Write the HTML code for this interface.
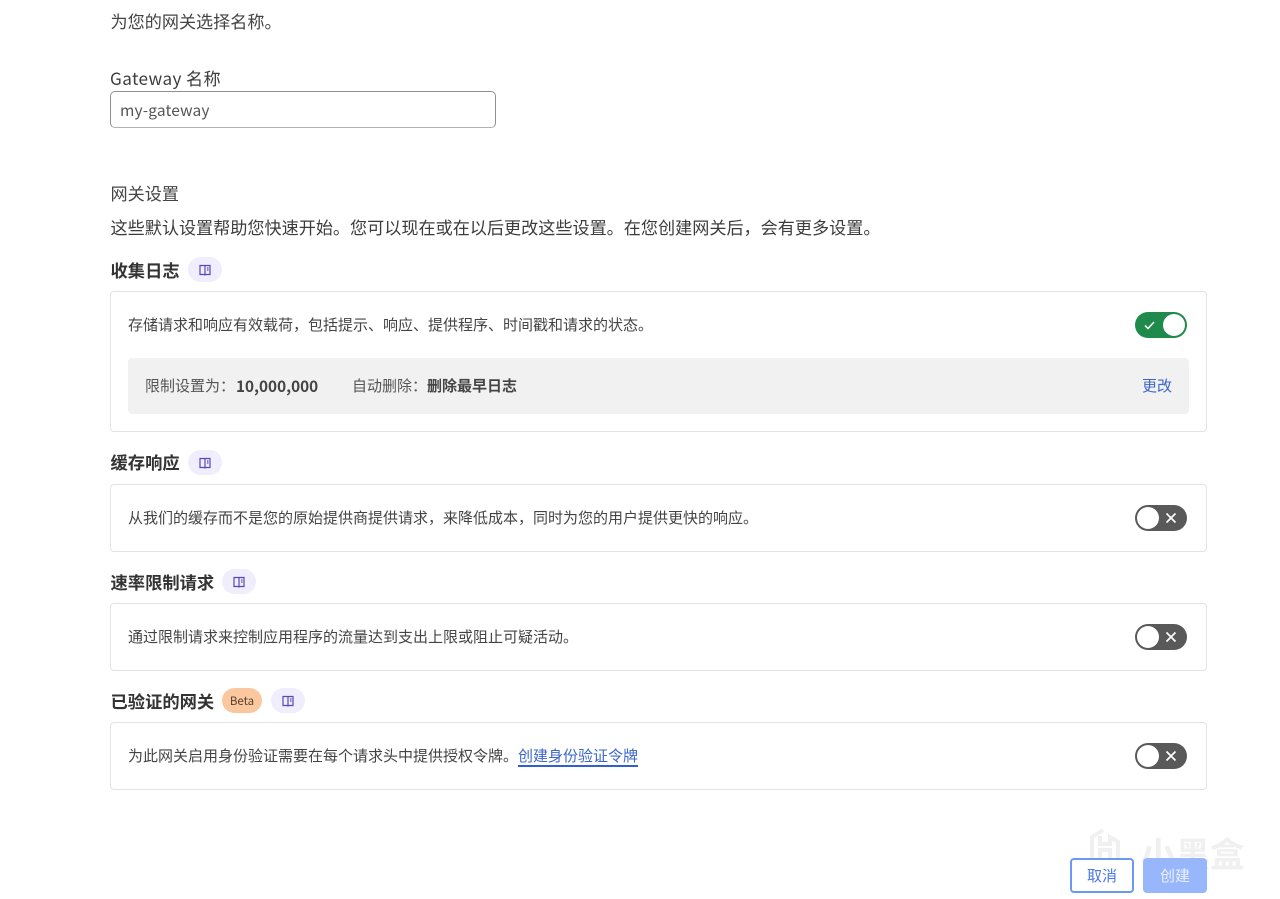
<!DOCTYPE html>
<html lang="zh"><head><meta charset="utf-8"><style>
html,body{margin:0;padding:0;background:#fff}
body{width:1280px;height:899px;position:relative;overflow:hidden;font-family:"Noto Sans CJK SC","Liberation Sans",sans-serif;color:#3c3c3c}
.t{position:absolute;white-space:nowrap;line-height:24px}
.h{font-size:17.3px;font-weight:700;color:#333}
.p{font-size:17.13px;color:#444}
.c{font-size:15px;color:#444}
.card{position:absolute;left:110px;width:1097px;background:#fff;border:1px solid #e3e3e3;border-radius:4px;box-sizing:border-box}
.pill{position:absolute;height:25px;border-radius:13px;background:#f0edfc;width:34px}
.pill svg{position:absolute;left:11px;top:7px}
.sw{position:absolute;left:1135px;width:52px;height:26px}
</style></head><body>
<div class="t p" style="left:110.500px;top:9px">为您的网关选择名称。</div>
<div class="t p" style="left:110px;top:66px;color:#3c3c3c;letter-spacing:.4px">Gateway 名称</div>
<div style="position:absolute;left:110px;top:91px;width:386px;height:37px;box-sizing:border-box;border:1px solid #8f8f8f;border-bottom-color:#b0b0b0;border-radius:5px"></div>
<div class="t" style="left:120px;top:98px;font-size:15.500px;color:#555;letter-spacing:.15px">my-gateway</div>

<div class="t p" style="left:110.500px;top:181px">网关设置</div>
<div class="t p" style="left:110.500px;top:215px;color:#3c3c3c">这些默认设置帮助您快速开始。您可以现在或在以后更改这些设置。在您创建网关后，会有更多设置。</div>

<div class="t h" style="left:110.500px;top:258px">收集日志</div>
<div class="pill" style="left:188px;top:257px"><svg width="12" height="12" viewBox="0 0 12 12" fill="none" stroke="#5b46b8" stroke-width="1.2"><path d="M1 1.500h4.500l.5.500.5-.500H11v9H6.500l-.5.500-.5-.500H1zM6 2v8.500M8 4h1.500M8 6h1.500"/></svg></div>
<div class="card" style="top:291px;height:141px"></div>
<div class="t c" style="left:128px;top:313px">存储请求和响应有效载荷，包括提示、响应、提供程序、时间戳和请求的状态。</div>
<svg class="sw" style="top:312px" viewBox="0 0 52 26"><rect width="52" height="26" rx="13" fill="#1f8a4c"/><circle cx="39" cy="13" r="11" fill="#fff"/><path d="M10 13.500l3 3 6-6.500" fill="none" stroke="#fff" stroke-width="1.500"/></svg>
<div style="position:absolute;left:128px;top:358px;width:1061px;height:56px;background:#f1f1f1;border-radius:4px"></div>
<div class="t c" style="left:145px;top:374px;color:#555">限制设置为：</div>
<div class="t" style="left:236px;top:374px;font-size:15.300px;font-weight:700;color:#444">10,000,000</div>
<div class="t c" style="left:352px;top:374px;color:#555">自动删除：</div>
<div class="t c" style="left:427px;top:374px;font-weight:700">删除最早日志</div>
<div class="t c" style="left:1142px;top:374px;color:#3b66c8">更改</div>

<div class="t h" style="left:110.500px;top:450px">缓存响应</div>
<div class="pill" style="left:188px;top:450px"><svg width="12" height="12" viewBox="0 0 12 12" fill="none" stroke="#5b46b8" stroke-width="1.2"><path d="M1 1.500h4.500l.5.500.5-.500H11v9H6.500l-.5.500-.5-.500H1zM6 2v8.500M8 4h1.500M8 6h1.500"/></svg></div>
<div class="card" style="top:484px;height:68px"></div>
<div class="t c" style="left:128px;top:506px">从我们的缓存而不是您的原始提供商提供请求，来降低成本，同时为您的用户提供更快的响应。</div>
<svg class="sw" style="top:505px" viewBox="0 0 52 26"><rect width="52" height="26" rx="13" fill="#595959"/><circle cx="13" cy="13" r="11" fill="#fff"/><path d="M31.500 8.500l9 9M40.500 8.500l-9 9" fill="none" stroke="#fff" stroke-width="1.700"/></svg>

<div class="t h" style="left:110.500px;top:570px">速率限制请求</div>
<div class="pill" style="left:222px;top:569px"><svg width="12" height="12" viewBox="0 0 12 12" fill="none" stroke="#5b46b8" stroke-width="1.2"><path d="M1 1.500h4.500l.5.500.5-.500H11v9H6.500l-.5.500-.5-.500H1zM6 2v8.500M8 4h1.500M8 6h1.500"/></svg></div>
<div class="card" style="top:603px;height:68px"></div>
<div class="t c" style="left:128px;top:625px">通过限制请求来控制应用程序的流量达到支出上限或阻止可疑活动。</div>
<svg class="sw" style="top:624px" viewBox="0 0 52 26"><rect width="52" height="26" rx="13" fill="#595959"/><circle cx="13" cy="13" r="11" fill="#fff"/><path d="M31.500 8.500l9 9M40.500 8.500l-9 9" fill="none" stroke="#fff" stroke-width="1.700"/></svg>

<div class="t h" style="left:110.500px;top:689px">已验证的网关</div>
<div style="position:absolute;left:222px;top:688px;width:40px;height:25px;border-radius:13px;background:#fbc79e;text-align:center;font-size:11.500px;line-height:26px;color:#5a4030">Beta</div>
<div class="pill" style="left:271px;top:688px"><svg width="12" height="12" viewBox="0 0 12 12" fill="none" stroke="#5b46b8" stroke-width="1.2"><path d="M1 1.500h4.500l.5.500.5-.500H11v9H6.500l-.5.500-.5-.500H1zM6 2v8.500M8 4h1.500M8 6h1.500"/></svg></div>
<div class="card" style="top:722px;height:68px"></div>
<div class="t c" style="left:128px;top:744px">为此网关启用身份验证需要在每个请求头中提供授权令牌。</div>
<div class="t c" style="left:518px;top:744px;color:#3b66c8;height:23px;border-bottom:2px solid #2f5fd0;box-sizing:border-box">创建身份验证令牌</div>

<svg class="sw" style="top:743px" viewBox="0 0 52 26"><rect width="52" height="26" rx="13" fill="#595959"/><circle cx="13" cy="13" r="11" fill="#fff"/><path d="M31.500 8.500l9 9M40.500 8.500l-9 9" fill="none" stroke="#fff" stroke-width="1.700"/></svg>

<svg style="position:absolute;left:1088px;top:826px" width="44" height="44" viewBox="0 0 44 44" fill="none" stroke="#f0f0f0" stroke-width="4"><path d="M15 4L4 11v24l8 5V24h10v14l8-5V16l-8-5v7H12V10"/></svg>
<div class="t" style="left:1141px;top:830px;font-size:34.500px;line-height:44px;font-weight:700;color:#f0f0f0">小黑盒</div>

<div style="position:absolute;left:1070px;top:858px;width:64px;height:35px;box-sizing:border-box;border:2px solid #6b97f5;border-radius:4px;background:#fff;text-align:center;font-size:15px;line-height:32px;color:#4a78e6">取消</div>
<div style="position:absolute;left:1143px;top:858px;width:64px;height:35px;border-radius:4px;background:#97b6fb;text-align:center;font-size:15px;line-height:35px;color:#eaf0ff">创建</div>
</body></html>
